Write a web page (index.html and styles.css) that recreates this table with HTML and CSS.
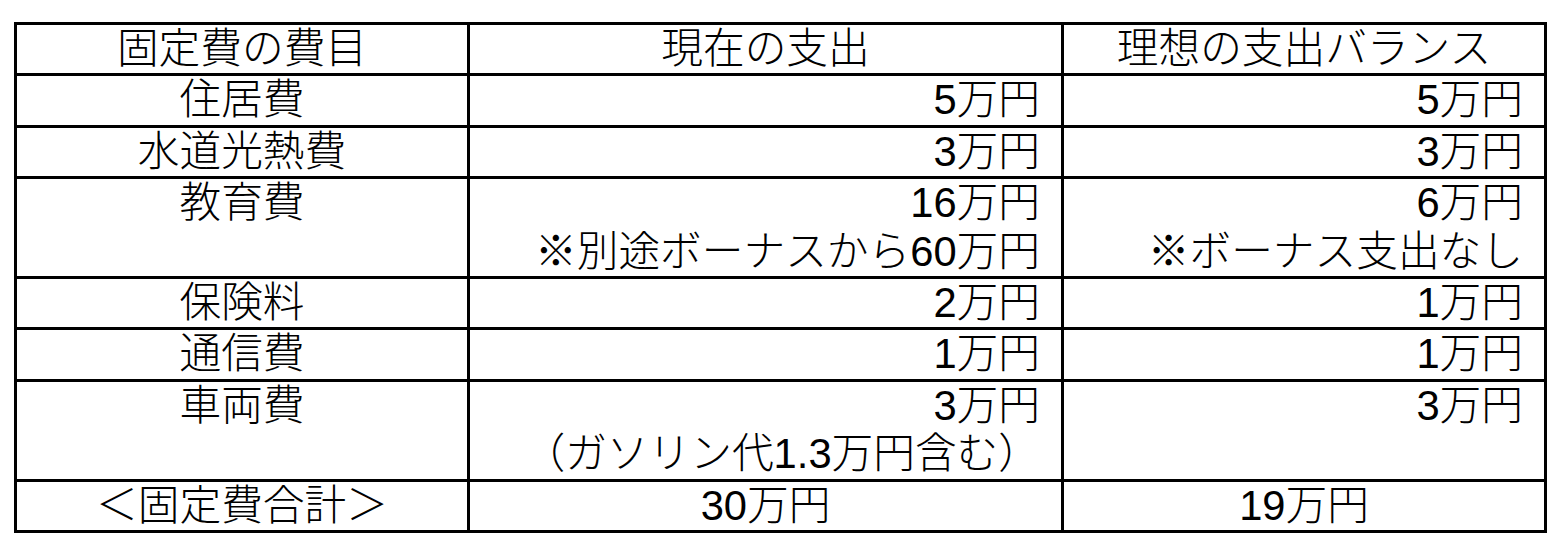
FILE: index.html
```html
<!DOCTYPE html>
<html lang="ja">
<head>
<meta charset="utf-8">
<title>固定費</title>
<link rel="stylesheet" href="styles.css">
</head>
<body>
<div class="sheet">
  <div class="cell center">固定費の費目</div>
  <div class="cell center">現在の支出</div>
  <div class="cell center">理想の支出バランス</div>

  <div class="cell center">住居費</div>
  <div class="cell right">5万円</div>
  <div class="cell right">5万円</div>

  <div class="cell center">水道光熱費</div>
  <div class="cell right">3万円</div>
  <div class="cell right">3万円</div>

  <div class="cell center">教育費</div>
  <div class="cell right">16万円<br>※別途ボーナスから60万円</div>
  <div class="cell right">6万円<br>※ボーナス支出なし</div>

  <div class="cell center">保険料</div>
  <div class="cell right">2万円</div>
  <div class="cell right">1万円</div>

  <div class="cell center">通信費</div>
  <div class="cell right">1万円</div>
  <div class="cell right">1万円</div>

  <div class="cell center">車両費</div>
  <div class="cell right">3万円<br>（ガソリン代1.3万円含む）</div>
  <div class="cell right">3万円</div>

  <div class="cell center">＜固定費合計＞</div>
  <div class="cell center">30万円</div>
  <div class="cell center">19万円</div>
</div>
</body>
</html>
```
FILE: styles.css
```css
html, body {
  margin: 0;
  padding: 0;
  background: #ffffff;
}

body {
  padding: 22px 0 0 14px;
  font-family: "Liberation Sans", "Noto Sans CJK JP", sans-serif;
  font-weight: 300;
  color: #000000;
}

.sheet {
  display: grid;
  grid-template-columns: 453px 594px 483px;
  width: max-content;
  border-left: 3px solid #000;
  border-top: 3px solid #000;
}

.cell {
  box-sizing: border-box;
  border-right: 3px solid #000;
  border-bottom: 3px solid #000;
  font-size: 41.7px;
  line-height: 48.4px;
  white-space: nowrap;
}

.center {
  text-align: center;
}

.right {
  text-align: right;
  padding-right: 21px;
}
```
